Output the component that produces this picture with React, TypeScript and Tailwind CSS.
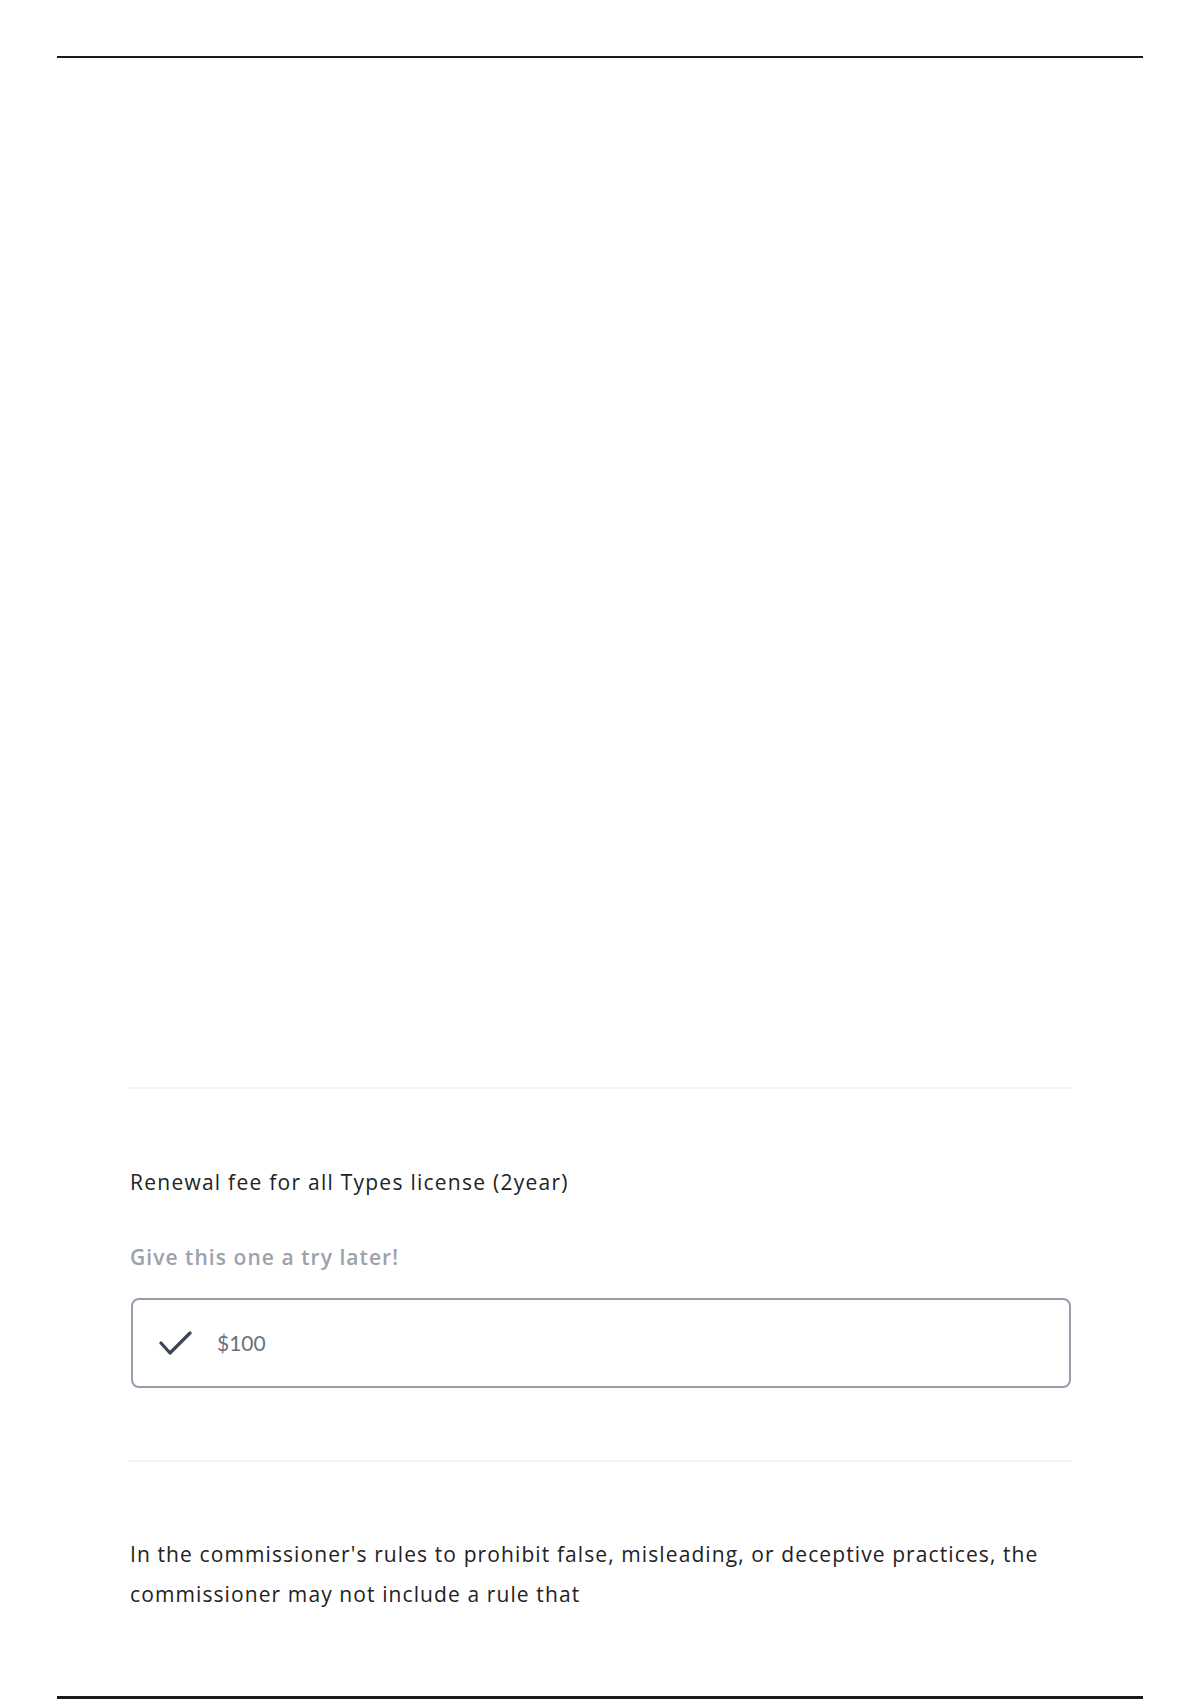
import React from "react";

export default function App() {
  return (
    <div className="w-[1200px] h-[1700px] bg-white overflow-hidden" style={{ fontFamily: "'Open Sans', 'Noto Sans', sans-serif" }}>
      <div className="pt-[56px] px-[57px]">
        <div className="h-[2px] bg-[#1a1a1a]" />
        <div className="px-[71px]">
          <div className="mt-[1029px] h-[2px] bg-[#f4f4f4]" />
          <div className="mt-[79px] px-[2px] text-[21px] leading-[28px] tracking-[1.25px] text-[#222222]">
            Renewal fee for all Types license (2year)
          </div>
          <div className="mt-[47px] px-[2px] text-[21px] leading-[28px] font-semibold tracking-[1.05px] text-[#9ca1ae]">
            Give this one a try later!
          </div>
          <div className="mt-[27px] ml-[3px] mr-[1px] h-[90px] rounded-[8px] border-2 border-[#9a9eab] flex items-center pl-[26px]">
            <svg width="34" height="26" viewBox="0 0 34 26" className="shrink-0">
              <polyline points="2,13 11,23 31,3" fill="none" stroke="#3e4457" strokeWidth="3.2" strokeLinecap="round" strokeLinejoin="round" />
            </svg>
            <span className="ml-[24px] text-[21px] leading-[28px] text-[#6b7080]" style={{ fontFamily: "Lato, sans-serif" }}>$100</span>
          </div>
          <div className="mt-[72px] h-[2px] bg-[#f4f4f4]" />
          <div className="mt-[72px] px-[2px] text-[21px] leading-[40px] tracking-[1.1px] text-[#222222]">
            In the commissioner's rules to prohibit false, misleading, or deceptive practices, the
            <br />
            commissioner may not include a rule that
          </div>
        </div>
        <div className="mt-[82px] h-[3px] bg-[#1a1a1a]" />
      </div>
    </div>
  );
}
